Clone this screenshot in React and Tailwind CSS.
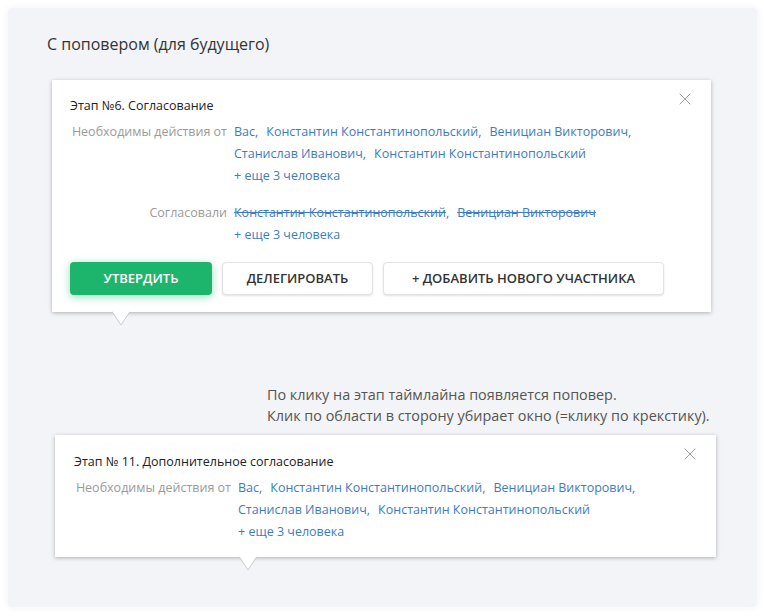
import { X } from 'lucide-react'

const font = { fontFamily: '"Open Sans", "Noto Sans", sans-serif' }

function Names({ items, done }) {
  return (
    <div className="flex flex-wrap max-w-[430px]">
      {items.map((n, i) => (
        <span key={i} className="mr-2 whitespace-nowrap">
          <span className={done ? 'line-through' : ''}>{n}</span>
          {i < items.length - 1 && ','}
        </span>
      ))}
    </div>
  )
}

function Row({ label, items, done, more = true }) {
  return (
    <div className="flex text-[12.5px] leading-[22px]">
      <div className="flex w-[164px] shrink-0 justify-end pr-[7px] text-[#9a9a9a]">
        <span className="whitespace-nowrap">{label}</span>
      </div>
      <div className="text-[#3d7cc2]">
        <Names items={items} done={done} />
        {more && <div>+ еще 3 человека</div>}
      </div>
    </div>
  )
}

function Arrow({ className }) {
  return (
    <svg className={className} width="18" height="15" viewBox="0 0 18 15">
      <polygon points="0,0 18,0 9,14" fill="#ffffff" />
      <polyline points="0,0.5 9,14 18,0.5" fill="none" stroke="#c9ccd0" strokeWidth="1" />
    </svg>
  )
}

function Popover({ title, children, className, arrow }) {
  return (
    <div className={`relative bg-white shadow-[0_1px_4px_rgba(0,0,0,0.28)] ${className}`}>
      <button className="absolute right-[16px] top-[9px] text-[#9b9b9b]" aria-label="Закрыть">
        <X size={20} strokeWidth={1.2} />
      </button>
      <div className="text-[12.5px] leading-[22px] text-[#222]">{title}</div>
      <div className="mt-1">{children}</div>
      <Arrow className={`absolute top-full -mt-[1px] ${arrow}`} />
    </div>
  )
}

const names = ['Вас', 'Константин Константинопольский', 'Венициан Викторович', 'Станислав Иванович', 'Константин Константинопольский']

export default function App() {
  return (
    <div className="min-h-[616px] bg-white p-2" style={font}>
      <div className="w-[749px] h-[599px] rounded bg-[#f2f4f7] pl-[39px] pt-6 shadow-[0_0_8px_rgba(0,0,0,0.06)]">
        <div className="text-base leading-6 text-[#333]">С поповером (для будущего)</div>

        <Popover title="Этап №6. Согласование" className="mt-6 ml-[5px] w-[659px] pl-[18px] pt-[15px] pb-[17px]" arrow="left-[60px]">
          <Row label="Необходимы действия от" items={names} />
          <div className="mt-[15px]">
            <Row label="Согласовали" items={['Константин Константинопольский', 'Венициан Викторович']} done />
          </div>
          <div className="mt-4 flex gap-[10px] text-[13px] font-semibold">
            <button className="h-[33px] w-[142px] rounded-sm bg-[#1db56b] uppercase text-white shadow-[0_2px_8px_rgba(29,181,107,0.45)]">Утвердить</button>
            <button className="h-[33px] w-[151px] rounded-sm border border-[#e1e3e6] bg-white uppercase text-[#333] shadow-[0_1px_2px_rgba(0,0,0,0.12)]">Делегировать</button>
            <button className="h-[33px] w-[281px] rounded-sm border border-[#e1e3e6] bg-white uppercase text-[#333] shadow-[0_1px_2px_rgba(0,0,0,0.12)]">+ Добавить нового участника</button>
          </div>
        </Popover>

        <div className="mt-[72px] ml-[220px] text-[14.4px] leading-[21px] text-[#555]">
          <div>По клику на этап таймлайна появляется поповер.</div>
          <div>Клик по области в сторону убирает окно (=клику по крекстику).</div>
        </div>

        <Popover title="Этап № 11. Дополнительное согласование" className="mt-[9px] ml-[8px] w-[661px] pl-[19px] pt-[16px] pb-[14px]" arrow="left-[184px]">
          <Row label="Необходимы действия от" items={names} />
        </Popover>
      </div>
    </div>
  )
}
